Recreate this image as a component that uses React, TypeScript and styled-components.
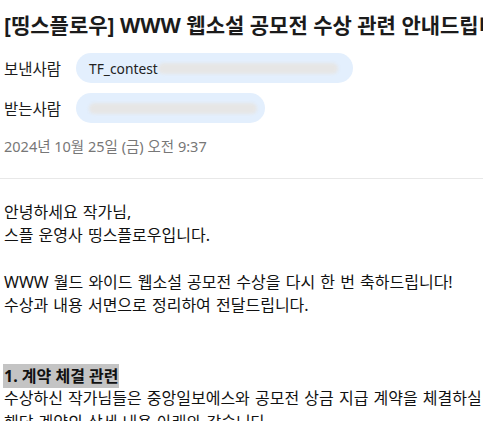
import React from "react";
import styled, { createGlobalStyle } from "styled-components";

const Global = createGlobalStyle`
  html, body { margin: 0; padding: 0; background: #fff; }
  body {
    font-family: "Noto Sans", "Noto Sans CJK KR", sans-serif;
    color: #111;
    overflow: hidden;
  }
`;

const Page = styled.div`
  width: 483px;
  height: 421px;
  overflow: hidden;
  box-sizing: border-box;
  padding: 0 0 0 4px;
`;

const Title = styled.h1`
  margin: 0;
  padding-top: 11px;
  font-size: 21px;
  font-weight: 700;
  line-height: 28px;
  white-space: nowrap;
  color: #1b1b1b;
  font-family: "Noto Sans", "Noto Sans CJK KR", sans-serif;
`;

const Meta = styled.div`
  display: flex;
  flex-direction: column;
  gap: 10px;
  margin-top: 14px;
`;

const Row = styled.div`
  display: flex;
  align-items: center;
  gap: 12px;
`;

const Label = styled.span`
  font-size: 15.5px;
  width: 60px;
  color: #1b1b1b;
  white-space: nowrap;
`;

const Pill = styled.div<{ $w: number }>`
  position: relative;
  height: 30px;
  width: ${(p) => p.$w}px;
  box-sizing: border-box;
  border-radius: 15px;
  background: #e3effd;
  display: flex;
  align-items: center;
  padding-left: 13px;
  font-size: 13.8px;
  color: #222;
`;

const Redact = styled.span<{ $w: number }>`
  display: inline-block;
  width: ${(p) => p.$w}px;
  height: 11px;
  border-radius: 6px;
  background: #e6e6e6;
  filter: blur(1.5px);
`;

const DateLine = styled.div`
  margin-top: 13px;
  font-size: 14.5px;
  color: #777;
  line-height: 20px;
`;

const Divider = styled.hr`
  border: 0;
  height: 1px;
  background: #e8e8e8;
  margin: 22px 0 0 -4px;
`;

const Body = styled.div`
  padding-top: 22px;
  font-size: 16px;
  line-height: 23.3px;
  word-spacing: 1px;
  color: #111;
  white-space: nowrap;
`;

const Line = styled.div`
  height: 23.3px;
`;

const Mark = styled.span`
  display: inline-block;
  background: #c4c4c4;
  font-weight: 700;
  line-height: 24px;
  padding: 0 1px;
  margin-left: -1px;
  word-spacing: 0;
`;

export default function App() {
  return (
    <Page>
      <Global />
      <Title>[띵스플로우] WWW 웹소설 공모전 수상 관련 안내드립니다</Title>
      <Meta>
        <Row>
          <Label>보낸사람</Label>
          <Pill $w={277}>
            TF_contest
            <Redact $w={180} />
          </Pill>
        </Row>
        <Row>
          <Label>받는사람</Label>
          <Pill $w={189}>
            <Redact $w={168} />
          </Pill>
        </Row>
      </Meta>
      <DateLine>2024년 10월 25일 (금) 오전 9:37</DateLine>
      <Divider />
      <Body>
        <Line>안녕하세요 작가님,</Line>
        <Line>스플 운영사 띵스플로우입니다.</Line>
        <Line />
        <Line>WWW 월드 와이드 웹소설 공모전 수상을 다시 한 번 축하드립니다!</Line>
        <Line>수상과 내용 서면으로 정리하여 전달드립니다.</Line>
        <Line />
        <Line />
        <Line>
          <Mark>1. 계약 체결 관련</Mark>
        </Line>
        <Line>수상하신 작가님들은 중앙일보에스와 공모전 상금 지급 계약을 체결하실 예정입니다.</Line>
        <Line>해당 계약의 상세 내용 아래와 같습니다.</Line>
      </Body>
    </Page>
  );
}
